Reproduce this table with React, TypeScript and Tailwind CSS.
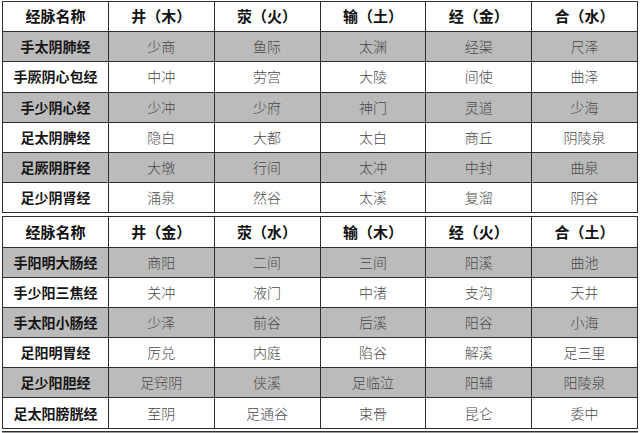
const HEAD1 = ["经脉名称", "井（木）", "荥（火）", "输（土）", "经（金）", "合（水）"];
const ROWS1 = [
  ["手太阴肺经", "少商", "鱼际", "太渊", "经渠", "尺泽"],
  ["手厥阴心包经", "中冲", "劳宫", "大陵", "间使", "曲泽"],
  ["手少阴心经", "少冲", "少府", "神门", "灵道", "少海"],
  ["足太阴脾经", "隐白", "大都", "太白", "商丘", "阴陵泉"],
  ["足厥阴肝经", "大墩", "行间", "太冲", "中封", "曲泉"],
  ["足少阴肾经", "涌泉", "然谷", "太溪", "复溜", "阴谷"],
];
const HEAD2 = ["经脉名称", "井（金）", "荥（水）", "输（木）", "经（火）", "合（土）"];
const ROWS2 = [
  ["手阳明大肠经", "商阳", "二间", "三间", "阳溪", "曲池"],
  ["手少阳三焦经", "关冲", "液门", "中渚", "支沟", "天井"],
  ["手太阳小肠经", "少泽", "前谷", "后溪", "阳谷", "小海"],
  ["足阳明胃经", "厉兑", "内庭", "陷谷", "解溪", "足三里"],
  ["足少阳胆经", "足窍阴", "侠溪", "足临泣", "阳辅", "阳陵泉"],
  ["足太阳膀胱经", "至阴", "足通谷", "束骨", "昆仑", "委中"],
];

function Table({ head, rows }: { head: string[]; rows: string[][] }) {
  return (
    <div className="grid grid-cols-6 gap-px bg-[#2e2e2e] p-px">
      {head.map((h, i) => (
        <div key={i} className="flex h-[29.2px] items-center justify-center bg-white text-[15px] font-bold text-[#111]">
          {h}
        </div>
      ))}
      {rows.map((r, ri) =>
        r.map((c, ci) => (
          <div
            key={ri + "-" + ci}
            className={
              "flex h-[29.2px] items-center justify-center " +
              (ri % 2 === 0 ? "bg-[#bbbbbb] " : "bg-white ") +
              (ci === 0 ? "text-[14px] font-bold text-[#151515]" : "text-[14px] font-light text-[#484848]")
            }
          >
            {c}
          </div>
        ))
      )}
    </div>
  );
}

export default function App() {
  return (
    <div
      className="h-[433px] w-[640px] overflow-hidden bg-white px-[2px] pt-[1px]"
      style={{ fontFamily: '"Noto Sans CJK SC", "Noto Sans", sans-serif' }}
    >
      <Table head={HEAD1} rows={ROWS1} />
      <div className="h-[3px]" />
      <Table head={HEAD2} rows={ROWS2} />
      <div className="mt-[2px] h-[3px] border-t border-[#2e2e2e] bg-[#9a9a9a]" />
    </div>
  );
}
